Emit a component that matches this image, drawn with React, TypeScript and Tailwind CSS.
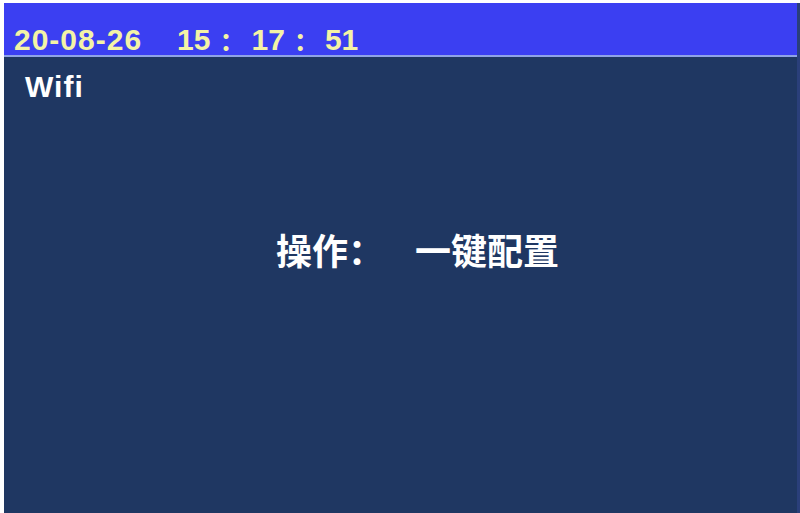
export default function App() {
  return (
    <div className="w-[800px] h-[513px] bg-white pl-[4px] pt-[3px] overflow-hidden">
      <div
        className="flex flex-col h-full bg-[#1f3762] border-r-[3px] border-[#2a3f7a]"
        style={{ fontFamily: '"Liberation Sans", "Noto Sans CJK SC", sans-serif' }}
      >
        {/* header with date/time */}
        <div className="h-[54px] bg-[#3b3ff2] flex items-end pl-[10px] border-b-[2px] border-[#8fa3e6] text-[#f3f3a6] font-bold text-[30px] leading-none">
          <span className="tracking-[1px]">20-08-26</span>
          <span className="ml-[35px]">15</span>
          <span className="ml-[9px] text-[26px]">：</span>
          <span className="ml-[6px]">17</span>
          <span className="ml-[9px] text-[26px]">：</span>
          <span className="ml-[5px]">51</span>
        </div>

        <div className="px-[21px] pt-[15px] text-white font-bold text-[30px] leading-none tracking-[1px]">
          Wifi
        </div>

        <div className="flex items-center pl-[272px] pt-[133px] text-white font-bold text-[36px] leading-none">
          <span>操作：</span>
          <span className="ml-[31px]">一键配置</span>
        </div>
      </div>
    </div>
  );
}
